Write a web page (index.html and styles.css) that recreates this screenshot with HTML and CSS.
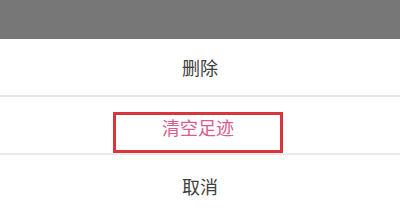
FILE: index.html
```html
<!DOCTYPE html>
<html lang="zh">
<head>
<meta charset="utf-8">
<link rel="stylesheet" href="styles.css">
</head>
<body>
<div class="mask"></div>
<div class="sheet">
  <div class="row row-del">删除</div>
  <div class="row row-clear">
    <div class="highlight"><span class="clear-text">清空足迹</span></div>
  </div>
  <div class="row row-cancel">取消</div>
</div>
</body>
</html>
```
FILE: styles.css
```css
html, body {
  margin: 0;
  padding: 0;
  width: 400px;
  height: 213px;
  overflow: hidden;
  background: #ffffff;
  font-family: "Noto Sans CJK SC", "Noto Sans", sans-serif;
}
.mask {
  height: 39px;
  background: #777777;
}
.sheet {
  display: flex;
  flex-direction: column;
  background: #fff;
}
.row {
  display: flex;
  justify-content: center;
  align-items: center;
  font-size: 18px;
  color: #404040;
}
.row-del {
  height: 56px;
  border-bottom: 2px solid #e6e6e6;
}
.row-clear {
  height: 58px;
  border-bottom: 2px solid #ebebeb;
  box-sizing: border-box;
  align-items: flex-start;
  justify-content: flex-start;
  padding-top: 15px;
}
.highlight {
  margin-left: 113px;
  width: 170px;
  height: 41px;
  box-sizing: border-box;
  border: 3px solid #d8353c;
  display: flex;
  justify-content: center;
  align-items: flex-start;
}
.clear-text {
  color: #d85c8e;
  font-size: 18px;
  line-height: 24px;
  margin-top: 0;
}
.row-cancel {
  height: 62px;
}
```
